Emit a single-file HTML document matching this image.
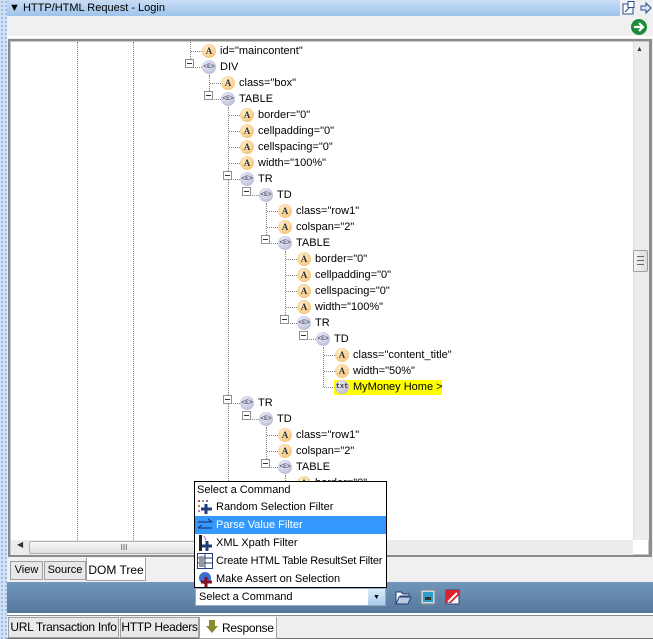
<!DOCTYPE html>
<html><head><style>
*{margin:0;padding:0;box-sizing:border-box}
body{width:653px;height:639px;position:relative;overflow:hidden;background:#f0f0f0;font-family:"Liberation Sans",sans-serif;font-size:11px;color:#000}
.a{position:absolute}
.row{position:absolute;height:16px;line-height:16px;white-space:nowrap}
.ic{position:absolute;width:14px;height:14px;border-radius:50%;top:1px;font-size:9px;line-height:14px;text-align:center;font-weight:bold;font-family:"Liberation Serif",serif}
.A{background:radial-gradient(circle at 40% 35%,#fff0d0,#f4b860);color:#333}
.E{background:radial-gradient(circle at 40% 35%,#eef,#a8b0c8);color:#556;font-size:6px;font-family:"Liberation Sans",sans-serif}
.X{background:radial-gradient(circle at 40% 35%,#eee,#b0a8d8);color:#333;font-size:7px;font-family:"Liberation Mono",monospace}
.ex{position:absolute;width:9px;height:9px;border:1px solid #909090;background:#fff;top:4px}
.ex:after{content:"";position:absolute;left:1px;top:3px;width:5px;height:1px;background:#333}
.h{position:absolute;border-top:1px dotted #808080;height:0}
.v{position:absolute;border-left:1px dotted #808080;width:0}
.tab{position:absolute;border:1px solid #a0a0a0;background:#e8e8e8;line-height:17px;font-size:11px;white-space:nowrap;text-align:center;overflow:hidden}
.mi{height:18px;line-height:18px;padding-left:21px;position:relative;white-space:nowrap}
</style></head><body>
<div class="a" style="left:0;top:0;width:7px;height:639px;background:#cfe0f4;background-image:radial-gradient(#7fa7d8 0.7px,transparent 1px);background-size:4px 4px"></div>
<div class="a" style="left:7px;top:0;width:613px;height:16px;background:linear-gradient(#c8ddf4,#9dc3ea);line-height:16px;font-size:11px;padding-left:2px">▼ HTTP/HTML Request - Login</div>
<div class="a" style="left:620px;top:0;width:33px;height:16px;background:#f0f0f0"></div>
<svg class="a" style="left:621px;top:1px" width="32" height="14"><rect x="2" y="3" width="10" height="10" fill="#fff" stroke="#2a4c8c"/><rect x="7" y="0.5" width="6" height="6" fill="#fff" stroke="#2a4c8c"/><path d="M4 11 L8 7" stroke="#2a4c8c"/><path d="M20 5 H25 V2 L30 7 L25 12 V9 H20Z" fill="#dde8f8" stroke="#2a4c8c"/></svg>
<div class="a" style="left:7px;top:16px;width:646px;height:22px;background:#f0f0f0;border-bottom:2px solid #fff"></div>
<svg class="a" style="left:630px;top:18px" width="18" height="18"><circle cx="9" cy="9" r="8" fill="#1f8a3a"/><path d="M4 9 H12 M9 5 L13 9 L9 13" stroke="#fff" stroke-width="2.2" fill="none"/></svg>
<div class="a" style="left:8px;top:39px;width:644px;height:518px;border:2px solid #8a8a8a;border-right:3px solid #8a8e9c;background:#fff"></div>
<div class="a" style="left:10px;top:41px;width:639px;height:514px;border:1px solid #c8c8c8;background:#fff;overflow:hidden">
<div class="v" style="left:66px;top:0;height:500px"></div>
<div class="v" style="left:122px;top:0;height:500px"></div>
</div>
<div class="a" style="left:11px;top:42px;width:622px;height:498px;overflow:hidden">
<div style="position:absolute;left:-11px;top:-40px;width:700px;height:600px">
<div class="v" style="left:190px;top:40px;height:25px"></div>
<div class="v" style="left:209px;top:73px;height:24px"></div>
<div class="v" style="left:228px;top:105px;height:440px"></div>
<div class="v" style="left:247px;top:185px;height:8px"></div>
<div class="v" style="left:247px;top:409px;height:8px"></div>
<div class="v" style="left:266px;top:201px;height:40px"></div>
<div class="v" style="left:266px;top:425px;height:40px"></div>
<div class="v" style="left:285px;top:249px;height:72px"></div>
<div class="v" style="left:285px;top:473px;height:40px"></div>
<div class="v" style="left:304px;top:329px;height:8px"></div>
<div class="v" style="left:323px;top:345px;height:40px"></div>

<div class="h" style="left:191px;top:49px;width:11px"></div><div class="ic A" style="left:202px;top:42px">A</div><div class="row" style="left:220px;top:41px">id="maincontent"</div>
<div class="ex" style="left:185px;top:57px"></div><div class="h" style="left:195px;top:65px;width:7px"></div><div class="ic E" style="left:202px;top:58px">&lt;E&gt;</div><div class="row" style="left:220px;top:57px">DIV</div>
<div class="h" style="left:210px;top:81px;width:11px"></div><div class="ic A" style="left:221px;top:74px">A</div><div class="row" style="left:239px;top:73px">class="box"</div>
<div class="ex" style="left:204px;top:89px"></div><div class="h" style="left:214px;top:97px;width:7px"></div><div class="ic E" style="left:221px;top:90px">&lt;E&gt;</div><div class="row" style="left:239px;top:89px">TABLE</div>
<div class="h" style="left:229px;top:113px;width:11px"></div><div class="ic A" style="left:240px;top:106px">A</div><div class="row" style="left:258px;top:105px">border="0"</div>
<div class="h" style="left:229px;top:129px;width:11px"></div><div class="ic A" style="left:240px;top:122px">A</div><div class="row" style="left:258px;top:121px">cellpadding="0"</div>
<div class="h" style="left:229px;top:145px;width:11px"></div><div class="ic A" style="left:240px;top:138px">A</div><div class="row" style="left:258px;top:137px">cellspacing="0"</div>
<div class="h" style="left:229px;top:161px;width:11px"></div><div class="ic A" style="left:240px;top:154px">A</div><div class="row" style="left:258px;top:153px">width="100%"</div>
<div class="ex" style="left:223px;top:169px"></div><div class="h" style="left:233px;top:177px;width:7px"></div><div class="ic E" style="left:240px;top:170px">&lt;E&gt;</div><div class="row" style="left:258px;top:169px">TR</div>
<div class="ex" style="left:242px;top:185px"></div><div class="h" style="left:252px;top:193px;width:7px"></div><div class="ic E" style="left:259px;top:186px">&lt;E&gt;</div><div class="row" style="left:277px;top:185px">TD</div>
<div class="h" style="left:267px;top:209px;width:11px"></div><div class="ic A" style="left:278px;top:202px">A</div><div class="row" style="left:296px;top:201px">class="row1"</div>
<div class="h" style="left:267px;top:225px;width:11px"></div><div class="ic A" style="left:278px;top:218px">A</div><div class="row" style="left:296px;top:217px">colspan="2"</div>
<div class="ex" style="left:261px;top:233px"></div><div class="h" style="left:271px;top:241px;width:7px"></div><div class="ic E" style="left:278px;top:234px">&lt;E&gt;</div><div class="row" style="left:296px;top:233px">TABLE</div>
<div class="h" style="left:286px;top:257px;width:11px"></div><div class="ic A" style="left:297px;top:250px">A</div><div class="row" style="left:315px;top:249px">border="0"</div>
<div class="h" style="left:286px;top:273px;width:11px"></div><div class="ic A" style="left:297px;top:266px">A</div><div class="row" style="left:315px;top:265px">cellpadding="0"</div>
<div class="h" style="left:286px;top:289px;width:11px"></div><div class="ic A" style="left:297px;top:282px">A</div><div class="row" style="left:315px;top:281px">cellspacing="0"</div>
<div class="h" style="left:286px;top:305px;width:11px"></div><div class="ic A" style="left:297px;top:298px">A</div><div class="row" style="left:315px;top:297px">width="100%"</div>
<div class="ex" style="left:280px;top:313px"></div><div class="h" style="left:290px;top:321px;width:7px"></div><div class="ic E" style="left:297px;top:314px">&lt;E&gt;</div><div class="row" style="left:315px;top:313px">TR</div>
<div class="ex" style="left:299px;top:329px"></div><div class="h" style="left:309px;top:337px;width:7px"></div><div class="ic E" style="left:316px;top:330px">&lt;E&gt;</div><div class="row" style="left:334px;top:329px">TD</div>
<div class="h" style="left:324px;top:353px;width:11px"></div><div class="ic A" style="left:335px;top:346px">A</div><div class="row" style="left:353px;top:345px">class="content_title"</div>
<div class="h" style="left:324px;top:369px;width:11px"></div><div class="ic A" style="left:335px;top:362px">A</div><div class="row" style="left:353px;top:361px">width="50%"</div>
<div class="h" style="left:324px;top:385px;width:11px"></div><div class="a" style="left:334px;top:378px;width:108px;height:15px;background:#ffff00"></div><div class="ic X" style="left:335px;top:378px">txt</div><div class="row" style="left:353px;top:377px">MyMoney Home &gt;</div>
<div class="ex" style="left:223px;top:393px"></div><div class="h" style="left:233px;top:401px;width:7px"></div><div class="ic E" style="left:240px;top:394px">&lt;E&gt;</div><div class="row" style="left:258px;top:393px">TR</div>
<div class="ex" style="left:242px;top:409px"></div><div class="h" style="left:252px;top:417px;width:7px"></div><div class="ic E" style="left:259px;top:410px">&lt;E&gt;</div><div class="row" style="left:277px;top:409px">TD</div>
<div class="h" style="left:267px;top:433px;width:11px"></div><div class="ic A" style="left:278px;top:426px">A</div><div class="row" style="left:296px;top:425px">class="row1"</div>
<div class="h" style="left:267px;top:449px;width:11px"></div><div class="ic A" style="left:278px;top:442px">A</div><div class="row" style="left:296px;top:441px">colspan="2"</div>
<div class="ex" style="left:261px;top:457px"></div><div class="h" style="left:271px;top:465px;width:7px"></div><div class="ic E" style="left:278px;top:458px">&lt;E&gt;</div><div class="row" style="left:296px;top:457px">TABLE</div>
<div class="h" style="left:286px;top:481px;width:11px"></div><div class="ic A" style="left:297px;top:474px">A</div><div class="row" style="left:315px;top:473px">border="0"</div>
</div></div>
<div class="a" style="left:633px;top:42px;width:16px;height:498px;background:#ececec;border-left:1px solid #e0e0e0"></div>
<div class="a" style="left:636px;top:46px;font-size:7px;color:#333">▲</div>
<div class="a" style="left:633px;top:250px;width:15px;height:22px;border:1px solid #a0a0a0;border-radius:2px;background:linear-gradient(90deg,#f4f4f4,#dcdcdc)"></div>
<div class="a" style="left:637px;top:256px;width:7px;height:9px;border-top:1px solid #666;border-bottom:1px solid #666"><div style="margin-top:3px;border-top:1px solid #666"></div></div>
<div class="a" style="left:11px;top:540px;width:622px;height:15px;background:#ececec"></div>
<div class="a" style="left:17px;top:540px;font-size:8px;color:#333">◀</div>
<div class="a" style="left:29px;top:541px;width:190px;height:13px;border:1px solid #b0b0b0;border-radius:2px;background:linear-gradient(#f8f8f8,#e0e0e0);text-align:center;font-size:8px;line-height:11px;color:#555">III</div>
<div class="tab" style="left:10px;top:561px;width:33px;height:19px">View</div>
<div class="tab" style="left:44px;top:561px;width:42px;height:19px">Source</div>
<div class="tab" style="left:86px;top:558px;width:60px;height:23px;background:#fff;border-top:none;line-height:24px;font-size:12px">DOM Tree</div>
<div class="a" style="left:7px;top:582px;width:646px;height:31px;background:linear-gradient(#7096bb,#56789c)"></div>
<div class="a" style="left:7px;top:613px;width:646px;height:3px;background:#fff;border-bottom:1px solid #8a8a98"></div>
<svg class="a" style="left:394px;top:589px" width="70" height="18"><path d="M2 3 H7 L9 5 H15 V7 H6 L3 15 H2Z" fill="#fff" stroke="#233d7a"/><path d="M5 8 H17 L14 15 H2Z" fill="#b8c8e0" stroke="#233d7a"/><rect x="27" y="1" width="14" height="14" fill="#c8d8e8" stroke="#888"/><rect x="29" y="3" width="10" height="10" fill="#2aa0c8"/><rect x="31" y="8" width="6" height="3" fill="#333"/><rect x="52" y="1" width="13" height="14" fill="#fff" stroke="#233d7a"/><path d="M52 1 H65 V6 L57 14 H52Z" fill="#e0202a"/><path d="M54 13 L63 4" stroke="#fff" stroke-width="2"/></svg>
<div class="a" style="left:195px;top:588px;width:191px;height:18px;border:1px solid #98a8c0;background:#fff;line-height:16px;padding-left:3px;font-size:11px">Select a Command</div>
<div class="a" style="left:368px;top:589px;width:17px;height:16px;background:linear-gradient(#d8ecfa,#a8ccec);font-size:7px;text-align:center;line-height:18px">▼</div>
<div class="a" style="left:194px;top:481px;width:193px;height:107px;border:1px solid #000;background:#fff;font-size:11px;overflow:hidden">
<div style="height:16px;line-height:16px;padding-left:2px">Select a Command</div>
<div class="mi"><svg class="a" style="left:2px;top:1px" width="16" height="16"><path d="M9 5 V15 M4 10 H15" stroke="#233d7a" stroke-width="3"/><circle cx="2" cy="2" r="1" fill="#c03"/><circle cx="6" cy="2" r="1" fill="#393"/><circle cx="10" cy="2" r="1" fill="#639"/><circle cx="2" cy="7" r="1" fill="#963"/><circle cx="2" cy="12" r="1" fill="#c3c"/></svg>Random Selection Filter</div>
<div class="mi" style="background:#3399ff;color:#fff"><svg class="a" style="left:2px;top:2px" width="16" height="14"><path d="M1 4 H15 M11 1 L15 4 M1 10 H15 M5 7 L1 10" stroke="#233d7a" stroke-width="1.2" fill="none"/></svg>Parse Value Filter</div>
<div class="mi"><svg class="a" style="left:2px;top:1px" width="16" height="16"><rect x="2" y="0" width="3" height="16" fill="#222"/><path d="M10 6 V16 M5 11 H15" stroke="#233d7a" stroke-width="3"/><path d="M7 1 L9 5" stroke="#a6c"/></svg>XML Xpath Filter</div>
<div class="mi"><svg class="a" style="left:2px;top:1px" width="16" height="16"><rect x="0.5" y="0.5" width="15" height="15" fill="#fff" stroke="#233d7a"/><path d="M0 5 H16 M0 10 H16 M8 0 V16" stroke="#233d7a"/><rect x="2" y="3" width="5" height="11" fill="#999"/></svg><span style="letter-spacing:-0.2px">Create HTML Table ResultSet Filter</span></div>
<div class="mi"><svg class="a" style="left:2px;top:1px" width="16" height="16"><circle cx="8" cy="7" r="6" fill="#3a6fd0"/><path d="M9 6 V16 M4 11 H15" stroke="#8a1020" stroke-width="3"/></svg>Make Assert on Selection</div>
</div>
<div class="a" style="left:7px;top:617px;width:646px;height:22px;background:#eee;border-bottom:1px solid #707070"></div>
<div class="tab" style="left:8px;top:617px;width:111px;height:21px;line-height:19px;font-size:12px;letter-spacing:-0.3px">URL Transaction Info</div>
<div class="tab" style="left:120px;top:617px;width:79px;height:21px;line-height:19px;font-size:12px;letter-spacing:-0.3px">HTTP Headers</div>
<div class="tab" style="left:199px;top:617px;width:78px;height:22px;line-height:22px;font-size:12px;background:#fff;border-top:none;text-align:left;padding-left:22px;letter-spacing:-0.3px">Response</div>
<svg class="a" style="left:206px;top:620px" width="12" height="14"><path d="M3 0 H9 V6 H12 L6 13 L0 6 H3Z" fill="#8a8a30"/></svg>
</body></html>
